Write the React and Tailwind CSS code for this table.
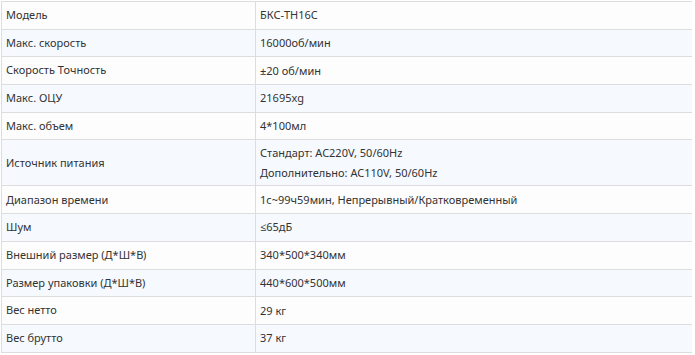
export default function App() {
  const rows = [
    ["Модель", ["БКС-TH16C"]],
    ["Макс. скорость", ["16000об/мин"]],
    ["Скорость Точность", ["±20 об/мин"]],
    ["Макс. ОЦУ", ["21695xg"]],
    ["Макс. объем", ["4*100мл"]],
    ["Источник питания", ["Стандарт: AC220V, 50/60Hz", "Дополнительно: AC110V, 50/60Hz"]],
    ["Диапазон времени", ["1с~99ч59мин, Непрерывный/Кратковременный"]],
    ["Шум", ["≤65дБ"]],
    ["Внешний размер (Д*Ш*В)", ["340*500*340мм"]],
    ["Размер упаковки (Д*Ш*В)", ["440*600*500мм"]],
    ["Вес нетто", ["29 кг"]],
    ["Вес брутто", ["37 кг"]],
  ];
  return (
    <div className="w-[695px] h-[355px] bg-white pt-px pl-px overflow-hidden" style={{ fontFamily: '"Noto Sans", "Open Sans", sans-serif' }}>
      <div className="w-[691px] border-t border-l border-[#dddddd] text-[11px] text-[#333333]">
        {rows.map(([k, v], i) => (
          <div
            key={i}
            className={`flex border-b border-[#dddddd] ${i % 2 === 1 ? "bg-[#f6faff]" : "bg-[#fdfdfd]"} ${v.length > 1 ? "h-[46px]" : "h-[27.7px]"}`}
          >
            <div className="w-[254px] border-r border-[#dddddd] flex items-center px-[4px]">{k}</div>
            <div className="flex-1 flex flex-col justify-center px-[4px]">
              {v.map((t, j) => (
                <div key={j} className="leading-[20px]">{t}</div>
              ))}
            </div>
          </div>
        ))}
      </div>
    </div>
  );
}
